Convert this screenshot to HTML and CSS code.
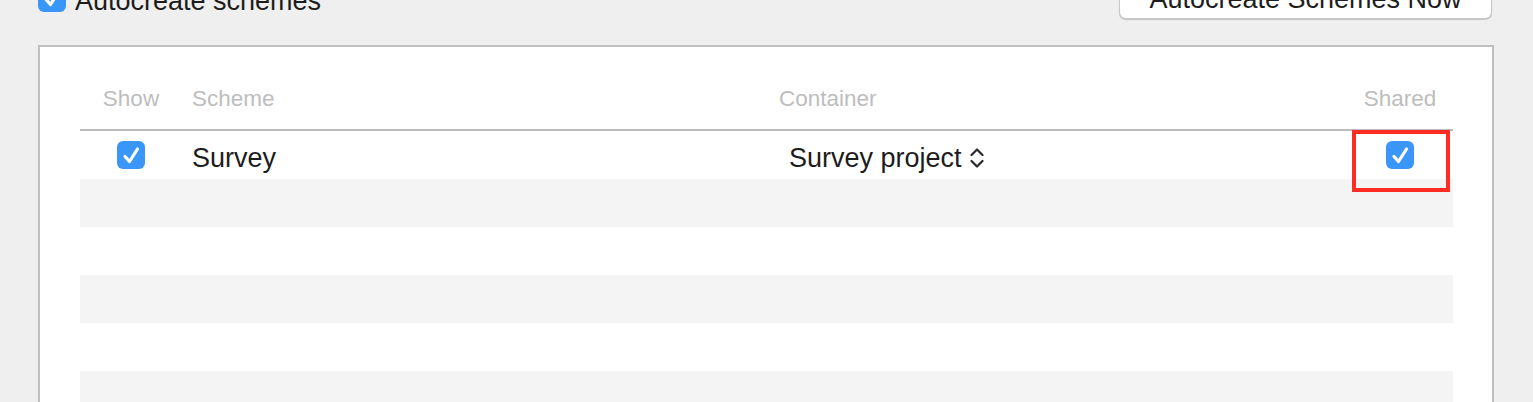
FILE: index.html
```html
<!DOCTYPE html>
<html>
<head>
<meta charset="utf-8">
<link rel="stylesheet" href="styles.css">
</head>
<body>
<div class="top">
  <label class="auto">
    <span class="cb"><svg viewBox="0 0 28 28" width="28" height="28"><path d="M8 15.5 L12.5 20.5 L20.5 8" fill="none" stroke="#fff" stroke-width="3.2" stroke-linecap="round" stroke-linejoin="round"/></svg></span>
    <span class="auto-text">Autocreate schemes</span>
  </label>
  <button class="btn">Autocreate Schemes Now</button>
</div>
<div class="panel">
  <div class="table">
    <div class="head">
      <div class="hc c-show">Show</div>
      <div class="hc c-scheme">Scheme</div>
      <div class="hc c-container">Container</div>
      <div class="hc c-shared">Shared</div>
    </div>
    <div class="row">
      <div class="cell c-show"><span class="cb"><svg viewBox="0 0 28 28" width="28" height="28"><path d="M8 15.5 L12.5 20.5 L20.5 8" fill="none" stroke="#fff" stroke-width="3.2" stroke-linecap="round" stroke-linejoin="round"/></svg></span></div>
      <div class="cell txt c-scheme">Survey</div>
      <div class="cell txt c-container">Survey project<svg class="chev" viewBox="0 0 14 22" width="14" height="22"><path d="M1.5 8 L7 2.5 L12.5 8 M1.5 14 L7 19.5 L12.5 14" fill="none" stroke="#2a2a2a" stroke-width="2.2" stroke-linecap="round" stroke-linejoin="round"/></svg></div>
      <div class="cell c-shared"><span class="cb"><svg viewBox="0 0 28 28" width="28" height="28"><path d="M8 15.5 L12.5 20.5 L20.5 8" fill="none" stroke="#fff" stroke-width="3.2" stroke-linecap="round" stroke-linejoin="round"/></svg></span><span class="mark"></span></div>
    </div>
    <div class="row alt"></div>
    <div class="row"></div>
    <div class="row alt"></div>
    <div class="row"></div>
    <div class="row alt"></div>
  </div>
</div>
</body>
</html>
```
FILE: styles.css
```css
html, body {
  margin: 0;
  padding: 0;
  background: #efefef;
  height: 402px;
  overflow: hidden;
  font-family: "Liberation Sans", Arial, sans-serif;
}
.top {
  display: flex;
  justify-content: space-between;
  align-items: flex-start;
  height: 35px;
  margin-top: -16px;
  padding: 0 41px 0 38px;
}
.auto {
  display: flex;
  align-items: flex-start;
  gap: 9px;
}
.auto-text {
  font-size: 27px;
  line-height: 28px;
  padding-top: 3px;
  color: #1d1d1d;
}
.cb {
  display: block;
  width: 28px;
  height: 28px;
  border-radius: 6px;
  background: #3a97f9;
}
.cb svg { display: block; }
.btn {
  box-sizing: border-box;
  width: 373px;
  height: 35px;
  background: #fff;
  border: 1px solid #c9c9c9;
  border-top: none;
  border-radius: 0 0 7px 7px;
  box-shadow: 0 1px 1px rgba(0,0,0,0.18);
  font-family: "Liberation Sans", Arial, sans-serif;
  font-size: 27px;
  line-height: 31px;
  padding: 0 0 4px;
  color: #1d1d1d;
  text-align: center;
}
.panel {
  box-sizing: border-box;
  margin: 26px 0 0 38px;
  width: 1456px;
  height: 400px;
  background: #fff;
  border: 2px solid #bfbfbf;
  padding: 0 39px 0 40px;
}
.table {
  width: 1373px;
}
.head, .row {
  display: grid;
  grid-template-columns: 102px 597px 1fr 106px;
}
.head {
  padding: 37px 0 15px;
  border-bottom: 2px solid #bcbcbc;
}
.hc {
  font-size: 22.5px;
  line-height: 30px;
  color: #bdbdbd;
}
.hc.c-show, .hc.c-shared { text-align: center; }
.hc.c-scheme { padding-left: 10px; }
.row {
  height: 48px;
  align-items: center;
}
.row.alt { background: #f4f4f4; }
.cell {
  position: relative;
  display: flex;
  align-items: center;
}
.cell.c-show, .cell.c-shared { justify-content: center; }
.cell.txt {
  box-sizing: border-box;
  height: 36px;
  padding-top: 6px;
  font-size: 27px;
  line-height: 30px;
  color: #1d1d1d;
  align-items: flex-start;
}
.cell.c-scheme { padding-left: 10px; }
.cell.c-container { padding-left: 10px; }
.chev {
  margin: 4px 0 0 8px;
  flex: none;
}
.mark {
  position: absolute;
  left: 5px;
  top: -11px;
  width: 98px;
  height: 62px;
  box-sizing: border-box;
  border: 4px solid #fe2c22;
}
```
